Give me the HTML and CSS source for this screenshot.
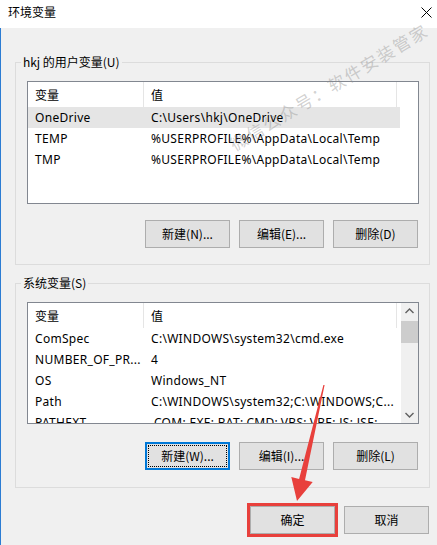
FILE: index.html
```html
<!DOCTYPE html>
<html lang="zh-CN">
<head>
<meta charset="utf-8">
<title>环境变量</title>
<link rel="stylesheet" href="styles.css">
</head>
<body>
<div class="window">
  <div class="titlebar">
    <span class="title">环境变量</span>
    <svg class="close" width="11" height="11" viewBox="0 0 11 11"><path d="M0.5 0.5 L10.5 10.5 M10.5 0.5 L0.5 10.5" stroke="#000" stroke-width="1" fill="none"/></svg>
  </div>
  <div class="client">
    <fieldset class="group">
      <legend>hkj 的用户变量(U)</legend>
      <div class="list">
        <div class="list-body">
          <div class="list-head"><span class="col-name">变量</span><span class="col-val">值</span></div>
          <div class="row selected"><span class="col-name">OneDrive</span><span class="col-val">C:\Users\hkj\OneDrive</span></div>
          <div class="row"><span class="col-name">TEMP</span><span class="col-val">%USERPROFILE%\AppData\Local\Temp</span></div>
          <div class="row"><span class="col-name">TMP</span><span class="col-val">%USERPROFILE%\AppData\Local\Temp</span></div>
        </div>
      </div>
      <div class="btn-row">
        <button class="btn">新建(N)...</button>
        <button class="btn">编辑(E)...</button>
        <button class="btn">删除(D)</button>
      </div>
    </fieldset>

    <fieldset class="group group-sys">
      <legend>系统变量(S)</legend>
      <div class="list list-sys">
        <div class="list-body">
          <div class="list-head"><span class="col-name">变量</span><span class="col-val">值</span></div>
          <div class="row"><span class="col-name">ComSpec</span><span class="col-val">C:\WINDOWS\system32\cmd.exe</span></div>
          <div class="row"><span class="col-name">NUMBER_OF_PR...</span><span class="col-val">4</span></div>
          <div class="row"><span class="col-name">OS</span><span class="col-val">Windows_NT</span></div>
          <div class="row"><span class="col-name">Path</span><span class="col-val">C:\WINDOWS\system32;C:\WINDOWS;C...</span></div>
          <div class="row"><span class="col-name">PATHEXT</span><span class="col-val">.COM;.EXE;.BAT;.CMD;.VBS;.VBE;.JS;.JSE;...</span></div>
        </div>
        <div class="scrollbar">
          <svg class="sb-arrow" width="17" height="17" viewBox="0 0 17 17"><path d="M4.5 10 L8.5 6 L12.5 10" stroke="#606060" stroke-width="1.4" fill="none"/></svg>
          <div class="sb-thumb"></div>
          <div class="sb-track"></div>
          <svg class="sb-arrow" width="17" height="17" viewBox="0 0 17 17"><path d="M4.5 7 L8.5 11 L12.5 7" stroke="#606060" stroke-width="1.4" fill="none"/></svg>
        </div>
      </div>
      <div class="btn-row">
        <button class="btn btn-focus">新建(W)...</button>
        <button class="btn">编辑(I)...</button>
        <button class="btn">删除(L)</button>
      </div>
    </fieldset>

    <div class="dialog-buttons">
      <button class="btn annot">确定</button>
      <button class="btn">取消</button>
    </div>
  </div>

  <div class="watermark">微信公众号：软件安装管家</div>
  <svg class="arrow" width="437" height="545" viewBox="0 0 437 545">
    <polygon points="324.6,385 305,480.3 312.7,482.1 297,501 291.3,477.1 299.1,478.9 323.4,385" fill="#e8403c"/>
  </svg>
</div>
</body>
</html>
```

FILE: styles.css
```css
* { box-sizing: border-box; }

html, body {
  margin: 0;
  padding: 0;
}

body {
  width: 437px;
  height: 545px;
  overflow: hidden;
  font-family: "Noto Sans", "Noto Sans CJK SC", sans-serif;
  font-size: 12px;
  color: #000;
  background: #f0f0f0;
}

.window {
  position: relative;
  width: 437px;
  height: 545px;
  display: flex;
  flex-direction: column;
}

.titlebar {
  height: 28px;
  background: #fff;
  display: flex;
  align-items: center;
  justify-content: space-between;
  padding: 0 5px 4px 8px;
}

.title {
  font-family: "Noto Sans CJK SC", sans-serif;
  font-size: 12px;
  line-height: 16px;
  color: #000;
}

.client {
  flex: 1;
  background: #f0f0f0;
  border-left: 1px solid #2b7cd3;
  padding: 26px 7px 0 14px;
  display: flex;
  flex-direction: column;
}

.group {
  margin: 0;
  padding: 0 0 16px 0;
  border: 1px solid #dcdcdc;
  min-width: 0;
  width: 415px;
}

.group legend {
  margin-left: 5px;
  padding: 0 2px;
  font-family: "Noto Sans CJK SC", sans-serif;
  font-size: 12px;
  line-height: 16px;
}

.group-sys {
  margin-top: 10px;
  padding-bottom: 17px;
}

.list {
  margin: 11px 10px 0 11px;
  height: 123px;
  border: 1px solid #828790;
  background: #fff;
  display: flex;
  overflow: hidden;
}

.list-sys {
  height: 122px;
}

.list-body {
  flex: 1;
  min-width: 0;
  overflow: hidden;
}

.list-head {
  display: flex;
  height: 25px;
  line-height: 25px;
  font-family: "Noto Sans CJK SC", sans-serif;
}

.list-head .col-name,
.list-head .col-val {
  border-right: 1px solid #e5e5e5;
}

.row {
  display: flex;
  height: 21px;
  line-height: 21px;
  width: 372px;
  letter-spacing: 0.3px;
}

.row.selected {
  background: #e5e5e5;
}

.col-name {
  width: 116px;
  padding-left: 7px;
  white-space: nowrap;
  overflow: hidden;
}

.col-val {
  width: 253px;
  padding-left: 7px;
  white-space: nowrap;
  overflow: hidden;
}

.scrollbar {
  width: 17px;
  background: #f0f0f0;
  display: flex;
  flex-direction: column;
}

.sb-arrow {
  display: block;
  flex: none;
}

.sb-thumb {
  height: 22px;
  margin: 1px 0 0 0;
  background: #cdcdcd;
}

.sb-track {
  flex: 1;
}

.btn-row {
  display: flex;
  justify-content: flex-end;
  gap: 9px;
  margin: 16px 11px 0 0;
}

.group-sys .btn-row {
  margin-top: 18px;
}

.btn {
  width: 85px;
  height: 28px;
  padding: 0;
  margin: 0;
  background: #e1e1e1;
  border: 1px solid #adadad;
  border-radius: 0;
  font-family: "Noto Sans CJK SC", sans-serif;
  font-size: 12px;
  line-height: 26px;
  color: #000;
}

.btn-focus {
  border-color: #0078d7;
  box-shadow: inset 0 0 0 1px #0078d7;
  outline: 1px dotted #000;
  outline-offset: -4px;
}

.dialog-buttons {
  display: flex;
  justify-content: flex-end;
  gap: 9px;
  margin: 18px 1px 0 0;
}

.annot {
  outline: 3px solid #e8403c;
  outline-offset: 0;
}

.watermark {
  position: absolute;
  left: 209px;
  top: 77px;
  width: 240px;
  text-align: center;
  font-family: "Noto Sans CJK SC", sans-serif;
  font-size: 17px;
  line-height: 20px;
  letter-spacing: 2px;
  color: rgba(140, 140, 140, 0.4);
  transform: rotate(-31deg);
  transform-origin: center center;
  pointer-events: none;
  white-space: nowrap;
}

.arrow {
  position: absolute;
  left: 0;
  top: 0;
  pointer-events: none;
}
```
